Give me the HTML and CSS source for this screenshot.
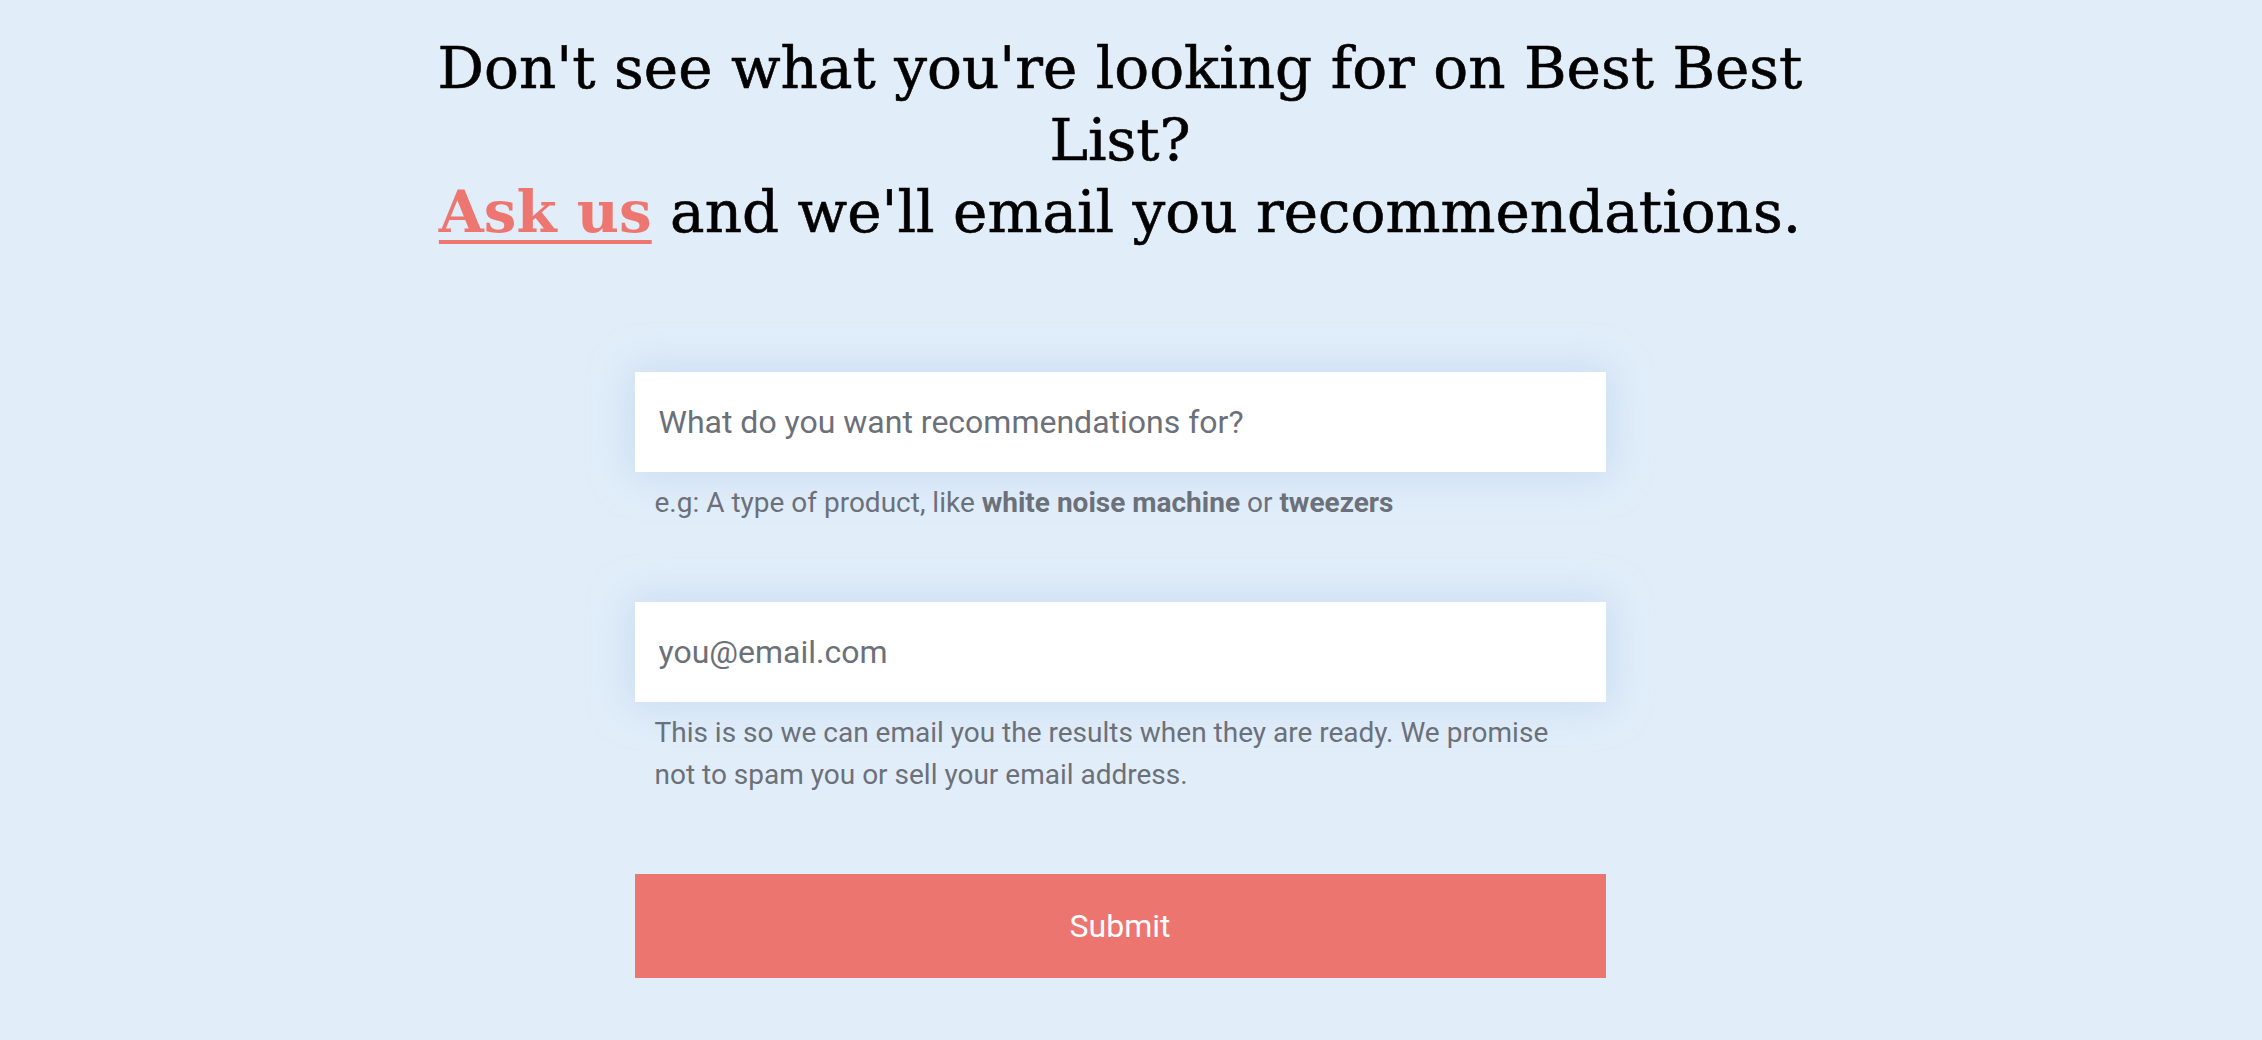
FILE: index.html
```html
<!DOCTYPE html>
<html lang="en">
<head>
<meta charset="utf-8">
<title>Ask us</title>
<link rel="stylesheet" href="styles.css">
</head>
<body>
<main class="page">
  <h1 class="headline">Don't see what you're looking for on Best Best List?<br><a class="ask-link" href="#">Ask us</a> and we'll email you recommendations.</h1>
  <form class="ask-form">
    <div class="field">
      <input class="text-input" type="text" placeholder="What do you want recommendations for?">
      <p class="help">e.g: A type of product, like <strong>white noise machine</strong> or <strong>tweezers</strong></p>
    </div>
    <div class="field">
      <input class="text-input" type="email" placeholder="you@email.com">
      <p class="help">This is so we can email you the results when they are ready. We promise not to spam you or sell your email address.</p>
    </div>
    <button class="submit" type="button">Submit</button>
  </form>
</main>
</body>
</html>
```

FILE: styles.css
```css
html, body {
  margin: 0;
  padding: 0;
  background: #e1eefa;
}

body {
  padding-right: 22px;
  font-family: Roboto, "Liberation Sans", sans-serif;
}

.page {
  display: flex;
  flex-direction: column;
  align-items: center;
  padding-top: 32px;
}

.headline {
  margin: 0;
  width: 1400px;
  text-align: center;
  font-family: "DejaVu Serif", "Liberation Serif", serif;
  font-weight: 400;
  font-size: 58px;
  line-height: 72px;
  color: #000;
  -webkit-text-stroke: 0.6px #000;
}

.ask-link {
  color: #ee7670;
  font-weight: 700;
  text-decoration: underline;
  text-decoration-thickness: 4px;
  text-underline-offset: 8px;
  -webkit-text-stroke: 0;
}

.ask-form {
  width: 971px;
  margin-top: 124px;
  display: flex;
  flex-direction: column;
}

.field {
  display: flex;
  flex-direction: column;
  margin-bottom: 78px;
}

.text-input {
  box-sizing: border-box;
  height: 100px;
  width: 100%;
  border: 0;
  outline: none;
  padding: 0 24px;
  background: #fff;
  font-family: Roboto, "Liberation Sans", sans-serif;
  font-size: 32px;
  color: #333;
  box-shadow: 0 0 40px 6px rgba(160, 190, 225, 0.35);
}

.text-input::placeholder {
  color: #6c7079;
  opacity: 1;
}

.help {
  margin: 10px 0 0;
  padding: 0 20px;
  font-size: 28px;
  line-height: 42px;
  color: #6c7079;
}

.help strong {
  font-weight: 700;
}

.submit {
  height: 104px;
  width: 100%;
  border: 0;
  background: #ec7570;
  color: #fff;
  font-family: Roboto, "Liberation Sans", sans-serif;
  font-size: 32px;
  font-weight: 400;
  cursor: pointer;
}
```
